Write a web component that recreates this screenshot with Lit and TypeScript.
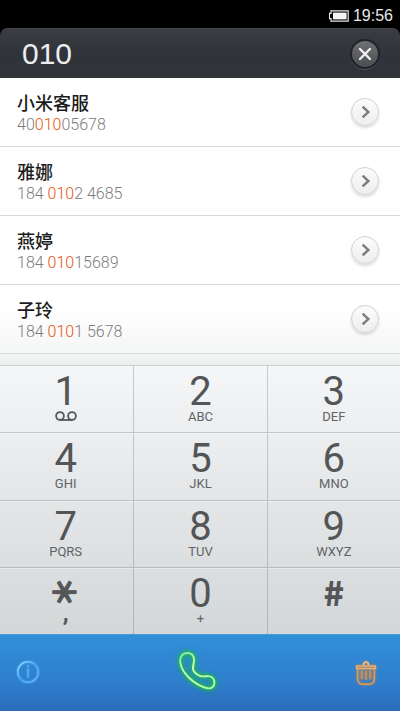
import { LitElement, html, css, svg, nothing } from "lit";
import { customElement, property } from "lit/decorators.js";

const FONT = css`Roboto, "Liberation Sans", "Noto Sans CJK SC", sans-serif`;

interface Contact {
  name: string;
  before: string;
  match: string;
  after: string;
}

const CONTACTS: Contact[] = [
  { name: "小米客服", before: "40", match: "010", after: "05678" },
  { name: "雅娜", before: "184 ", match: "010", after: "2 4685" },
  { name: "燕婷", before: "184 ", match: "010", after: "15689" },
  { name: "子玲", before: "184 ", match: "010", after: "1 5678" },
];

const KEYS: [string, string][] = [
  ["1", "voicemail"],
  ["2", "ABC"],
  ["3", "DEF"],
  ["4", "GHI"],
  ["5", "JKL"],
  ["6", "MNO"],
  ["7", "PQRS"],
  ["8", "TUV"],
  ["9", "WXYZ"],
  ["＊", ","],
  ["0", "+"],
  ["#", ""],
];

@customElement("status-bar")
export class StatusBar extends LitElement {
  static styles = css`
    :host {
      display: flex;
      align-items: center;
      justify-content: flex-end;
      gap: 4px;
      height: 28px;
      padding: 3px 7px 0 0;
      box-sizing: border-box;
      background: #000;
      color: #e8e8e8;
      font: 400 16px/24px "Liberation Sans", sans-serif;
    }
    svg {
      display: block;
    }
  `;

  render() {
    return html`
      <svg width="20" height="12" viewBox="0 0 20 12" aria-hidden="true">
        <path d="M2 .8h17.2v10.4H2V8.6H.4V3.4H2z" fill="none" stroke="#e8e8e8" stroke-width="1.2" />
        <rect x="4" y="2.6" width="13.6" height="6.8" fill="#f4f4f4" />
      </svg>
      <time>19:56</time>
    `;
  }
}

@customElement("number-bar")
export class NumberBar extends LitElement {
  @property() value = "010";

  static styles = css`
    :host {
      display: block;
      background: #000;
    }
    .bar {
      display: flex;
      align-items: center;
      height: 50px;
      padding: 0 20px 0 22px;
      box-sizing: border-box;
      border-radius: 8px 8px 0 0;
      border-top: 1px solid #46494c;
      background: linear-gradient(#393c40, #2f333a 55%, #313337);
    }
    input {
      flex: 1;
      min-width: 0;
      padding: 0;
      border: 0;
      outline: 0;
      background: none;
      color: #eceef0;
      font: 400 30px/40px "Liberation Sans", sans-serif;
    }
    button {
      display: grid;
      place-items: center;
      width: 30px;
      height: 30px;
      padding: 0;
      border: 2px solid #202227;
      border-radius: 50%;
      background: linear-gradient(#6e7074, #4b4d51);
      box-shadow: 0 1px 0 #505358;
      cursor: pointer;
    }
  `;

  render() {
    return html`
      <div class="bar">
        <input type="tel" aria-label="电话号码" .value=${this.value} />
        <button aria-label="清除">
          <svg width="14" height="14" viewBox="0 0 14 14" aria-hidden="true">
            <path d="M2 2l10 10M12 2L2 12" stroke="#f2f2f2" stroke-width="2.4" stroke-linecap="round" />
          </svg>
        </button>
      </div>
    `;
  }
}

@customElement("contact-row")
export class ContactRow extends LitElement {
  @property({ attribute: false }) contact!: Contact;

  static styles = css`
    :host {
      display: flex;
      align-items: center;
      justify-content: space-between;
      height: 69px;
      padding: 0 21px 0 17px;
      box-sizing: border-box;
      border-bottom: 1px solid #d9d9d9;
    }
    .text {
      padding-top: 2px;
    }
    .name {
      color: #1c1c1c;
      font: 500 18px/24px "Noto Sans CJK SC", sans-serif;
    }
    .number {
      color: #7c7c7c;
      font: 300 16px/22px ${FONT};
      white-space: pre;
    }
    mark {
      background: none;
      color: #e4560c;
    }
    button {
      display: grid;
      place-items: center;
      width: 28px;
      height: 28px;
      padding: 0;
      border: 1px solid #d2d2d2;
      border-radius: 50%;
      background: linear-gradient(#fcfcfc, #eeeeee);
      box-shadow: 0 2px 3px rgba(0, 0, 0, 0.14);
      cursor: pointer;
    }
  `;

  render() {
    const { name, before, match, after } = this.contact;
    return html`
      <div class="text">
        <div class="name">${name}</div>
        <div class="number">${before}<mark>${match}</mark>${after}</div>
      </div>
      <button aria-label="${name}详情">
        <svg width="14" height="14" viewBox="0 0 14 14" aria-hidden="true">
          <path d="M4.6 1.6L10.4 7l-5.8 5.4" fill="none" stroke="#7c7c7c" stroke-width="2.4" />
        </svg>
      </button>
    `;
  }
}

@customElement("dial-pad")
export class DialPad extends LitElement {
  static styles = css`
    :host {
      display: grid;
      grid-template-columns: repeat(3, 1fr);
      grid-auto-rows: minmax(66px, 1fr);
      background: linear-gradient(#f4f6f7, #e4e6e8 50%, #d3d7d8);
    }
    button {
      display: flex;
      flex-direction: column;
      align-items: center;
      padding: 9px 0 0;
      border: solid rgba(60, 70, 80, 0.24);
      border-width: 1px 0 0 1px;
      background: none;
      box-shadow: inset 0 1px 0 rgba(255, 255, 255, 0.4);
      color: #535557;
      font-family: ${FONT};
      cursor: pointer;
    }
    button:nth-child(3n + 1) {
      border-left: 0;
      padding-right: 2px;
    }
    .digit {
      font-size: 40px;
      line-height: 34px;
      font-weight: 400;
    }
    .symbol {
      font: 900 34px/30px "Noto Sans CJK SC", sans-serif;
    }
    .star {
      width: 30px;
      font: 900 30px/30px "Noto Sans CJK SC", sans-serif;
      -webkit-text-stroke: 1px;
      transform: rotate(90deg);
    }
    .letters {
      color: #616365;
      font-size: 13px;
      line-height: 16px;
    }
    .comma {
      font-size: 24px;
      font-weight: 700;
      line-height: 12px;
    }
    .voicemail {
      margin-top: 2px;
    }
  `;

  private letters(text: string) {
    if (text === "voicemail") {
      return html`<svg class="voicemail" width="22" height="12" viewBox="0 0 22 12" role="img" aria-label="语音信箱">
        ${svg`<g fill="none" stroke="#535557" stroke-width="1.8">
          <circle cx="5" cy="5" r="3.9" /><circle cx="17" cy="5" r="3.9" />
          <path d="M4.5 9h13" />
        </g>`}
      </svg>`;
    }
    return text ? html`<span class=${text === "," ? "comma" : "letters"}>${text}</span>` : nothing;
  }

  render() {
    return KEYS.map(([digit, text]) => {
      const kind = digit === "＊" ? "star" : digit === "#" ? "symbol" : "digit";
      return html`<button><span class=${kind}>${digit}</span>${this.letters(text)}</button>`;
    });
  }
}

@customElement("action-bar")
export class ActionBar extends LitElement {
  static styles = css`
    :host {
      display: grid;
      grid-template-columns: 1fr auto 1fr;
      align-items: center;
      height: 77px;
      padding: 0 20px 2px 14px;
      box-sizing: border-box;
      border-top: 1px solid #459bd9;
      background: linear-gradient(#318fd8, #2f7fcd 60%, #2a6dbb);
    }
    button {
      display: block;
      padding: 0;
      border: 0;
      background: none;
      cursor: pointer;
    }
    button:last-child {
      justify-self: end;
    }
    svg {
      display: block;
    }
    .call {
      filter: drop-shadow(0 0 2px #19d63c) drop-shadow(0 0 2px #12b048);
    }
    .info {
      filter: drop-shadow(0 0 1px #4db4ff);
    }
    .trash {
      filter: drop-shadow(0 0 1px #d98a3c);
    }
  `;

  render() {
    return html`
      <button aria-label="信息">
        <svg class="info" width="28" height="28" viewBox="0 0 28 28">
          <defs>
            <linearGradient id="ring" x1="0" y1="0" x2="1" y2="1">
              <stop offset="0" stop-color="#a4e0ff" />
              <stop offset=".5" stop-color="#4aa8f0" />
              <stop offset="1" stop-color="#65bdfa" />
            </linearGradient>
          </defs>
          <circle cx="14" cy="14" r="10.3" fill="none" stroke="url(#ring)" stroke-width="1.4" />
          <circle cx="14" cy="8.6" r="1" fill="#5cb0ee" />
          <path d="M12.6 12h1.5v8" fill="none" stroke="#5cb0ee" stroke-width="1.3" />
        </svg>
      </button>
      <button aria-label="拨号">
        <svg class="call" width="48" height="48" viewBox="0 0 48 48">
          <defs>
            <linearGradient id="tube" x1="0" y1="0" x2=".6" y2="1">
              <stop offset="0" stop-color="#7ee8a0" />
              <stop offset=".45" stop-color="#d4ffb0" />
              <stop offset="1" stop-color="#b4ff9a" />
            </linearGradient>
          </defs>
          <path
            d="M14.5 5C9.5 5 6.6 9 7.2 14c.8 6.2 4.3 11.4 8.8 15.8 5.4 5.2 12 9 18.4 10.4 4 .8 7-1.6 7-5.4 0-4.6-3-7-7.4-6.6-2.4.2-5 .6-7.200-.4-4-1.8-6.6-3.6-6.800-7.200-.2-3 1.400-6.200 1-9.600C20.6 7.400 18.400 5 14.500 5z"
            fill="none"
            stroke="url(#tube)"
            stroke-width="1.9"
          />
        </svg>
      </button>
      <button aria-label="删除">
        <svg class="trash" width="28" height="30" viewBox="0 0 28 30">
          <g fill="none" stroke="#e09a50" stroke-width="1.5" stroke-linejoin="round">
            <path d="M11.6 8.200a2.500 2.500 0 1 1 4.800 0" stroke="#f0c090" />
            <path d="M4.600 9h18.800v2.400H4.600z" stroke="#e8ae74" />
            <path d="M5.600 12v9.500c0 3.600 2 5.700 5.400 5.700h6c3.400 0 5.400-2.100 5.400-5.700V12" />
            <path d="M9.800 13.500v8.700M14 13.500v9.500M18.200 13.500v8.700" stroke="#cc8c50" stroke-width="2" />
          </g>
        </svg>
      </button>
    `;
  }
}

@customElement("app-root")
export class AppRoot extends LitElement {
  static styles = css`
    :host {
      display: flex;
      flex-direction: column;
      min-height: 100vh;
      background: #fff;
    }
    .list {
      padding-bottom: 11px;
      background: linear-gradient(#fff 80%, #f4f5f5 96%, #eceeee);
    }
    dial-pad {
      flex: 1;
    }
  `;

  render() {
    return html`
      <status-bar></status-bar>
      <number-bar></number-bar>
      <div class="list">
        ${CONTACTS.map((c) => html`<contact-row .contact=${c}></contact-row>`)}
      </div>
      <dial-pad></dial-pad>
      <action-bar></action-bar>
    `;
  }
}
